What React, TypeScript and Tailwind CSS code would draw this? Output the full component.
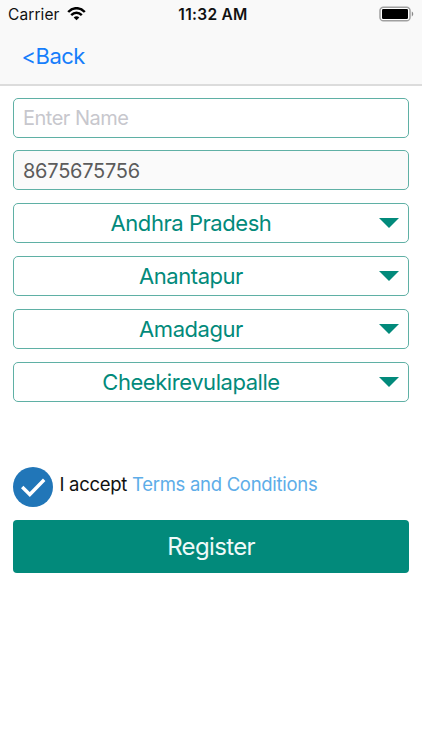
import React, { useState } from 'react';

const StatusBar: React.FC = () => (
  <div className="relative flex h-7 items-center justify-between pl-2 pr-[8px] text-[#111111]">
    <div className="flex items-center gap-[7px]">
      <span className="relative top-[0.5px] text-[15.5px] tracking-[0.1px]">Carrier</span>
      <svg className="h-[14px] w-[19px]" viewBox="0 0 19 14" fill="none" stroke="#000000">
        <path d="M1.2 5 C6 -0.1 13 -0.1 17.8 5" strokeWidth="2.5" />
        <path d="M4.2 8.2 C7.4 4.9 11.6 4.9 14.8 8.2" strokeWidth="2.4" />
        <path d="M9.5 13.2 L6.7 10.5 C8.3 8.9 10.7 8.9 12.3 10.5 Z" fill="#000000" stroke="none" />
      </svg>
    </div>
    <span className="absolute left-1/2 top-[0.5px] ml-[2px] flex h-7 -translate-x-1/2 items-center whitespace-nowrap text-[15.5px] font-semibold tracking-[0.3px]">
      11:32 AM
    </span>
    <svg className="h-4 w-9" viewBox="0 0 36 16">
      <rect x="2" y="1.2" width="30" height="13.6" rx="3.4" fill="#ffffff" stroke="#a0a0a0" strokeWidth="1.5" />
      <rect x="4" y="3" width="26" height="10" rx="1.2" fill="#000000" />
      <path d="M33.8 5.6 C35.7 6.3 35.7 9.7 33.8 10.4 Z" fill="#8a8a8a" />
    </svg>
  </div>
);

const places = ['Andhra Pradesh', 'Anantapur', 'Amadagur', 'Cheekirevulapalle'];

const App: React.FC = () => {
  const [accepted, setAccepted] = useState(true);

  return (
    <div className="h-[750px] w-full overflow-hidden bg-white font-['Inter','Liberation_Sans',sans-serif]">
      {/* Header */}
      <header className="h-[86px] border-b-2 border-[#dcdcdc] bg-[#f9f9f9]">
        <StatusBar />
        <button className="ml-[21.5px] mt-[11px] block text-[22px] leading-[34px] tracking-[-0.5px] text-[#167efb]">&lt;Back</button>
      </header>

      <main className="px-[13px] pt-[11.7px]">
        {/* Fields */}
        <div className="flex flex-col gap-[12.8px]">
          <input
            placeholder="Enter Name"
            className="h-10 w-full rounded-[5px] border border-[#5fb0a5] bg-white px-[9px] pt-[1px] text-[20px] tracking-[-0.5px] placeholder:text-[#c7c7cd]"
          />
          <input
            readOnly
            value="8675675756"
            className="h-10 w-full rounded-[5px] border border-[#5fb0a5] bg-[#fafafa] px-[9px] pt-[2px] text-[20px] tracking-[-0.25px] text-[#5c5c5c]"
          />
          {places.map((place) => (
            <button
              key={place}
              className="flex h-10 w-full items-center rounded-[5px] border border-[#5fb0a5] bg-white pr-[9px] text-[22px] tracking-[-0.45px] text-[#028a7b]"
            >
              <span className="flex-1 pr-[11px] pt-[0.8px]">{place}</span>
              <svg className="h-[10px] w-5" viewBox="0 0 20 10">
                <path d="M0 0 H20 L10 10 Z" fill="#028a7b" />
              </svg>
            </button>
          ))}
        </div>

        {/* Terms */}
        <div className="mt-[65px] flex h-10 items-center">
          <button className="h-10 w-10 rounded-full bg-[#2176b8]" onClick={() => setAccepted(!accepted)}>
            <svg className="h-10 w-10" viewBox="0 0 40 40" fill="none">
              {accepted && <path d="M9.2 20 L16.8 27.5 L31.2 12.8" stroke="#ffffff" strokeWidth="3.4" />}
            </svg>
          </button>
          <p className="-mt-[4px] ml-[6.5px] whitespace-pre text-[18.5px] tracking-[-0.29px] text-[#111111]">
            I accept <span className="text-[#5dade8]">Terms and Conditions</span>
          </p>
        </div>

        <button className="mt-[13px] block h-[53px] w-full rounded-[4px] bg-[#028a7b] pt-[2px] text-[24px] tracking-[-0.65px] text-[#eefaf8]">Register</button>
      </main>
    </div>
  );
};

export default App;
